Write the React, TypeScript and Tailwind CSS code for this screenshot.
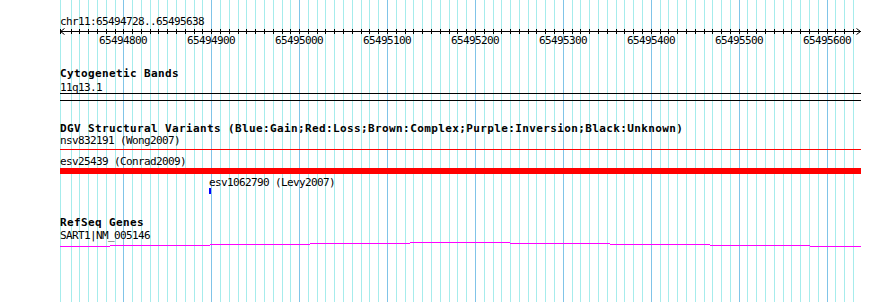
const START = 65494728;
const END = 65495638;
const LEFT = 60;
const SPAN = 800;

function toX(bp: number) {
  return Math.round(LEFT + ((bp - START) * SPAN) / (END - START));
}

// every 10 bp in the visible range
const grid: { bp: number; x: number; major: boolean }[] = [];
for (let bp = 65494730; bp <= 65495630; bp += 10) {
  grid.push({ bp, x: grid.length === 0 ? LEFT : toX(bp), major: bp % 100 === 0 });
}

// SART1 exon steps (x range, row)
const steps = [
  { x1: 60, x2: 110, y: 4 },
  { x1: 110, x2: 210, y: 3 },
  { x1: 210, x2: 310, y: 2 },
  { x1: 310, x2: 410, y: 1 },
  { x1: 410, x2: 510, y: 0 },
  { x1: 510, x2: 610, y: 1 },
  { x1: 610, x2: 710, y: 2 },
  { x1: 710, x2: 810, y: 3 },
  { x1: 810, x2: 861, y: 4 },
];

const mono =
  "font-['DejaVu_Sans_Mono',monospace] text-[11px] leading-[12px] pt-[1px] text-black whitespace-nowrap";
const label = `${mono} tracking-[-0.62px]`;
const title = `${mono} font-bold tracking-[0.38px]`;

function Grid() {
  return (
    <svg className="absolute inset-0" width={890} height={302} shapeRendering="crispEdges">
      {grid.map((g) => (
        <rect key={g.bp} x={g.x} y={0} width={1} height={302} fill={g.major ? '#80c4e8' : '#a6ecec'} />
      ))}
    </svg>
  );
}

function Ruler() {
  return (
    <svg width={801} height={19} className="block">
      <rect x={0} y={3} width={801} height={1} fill="#000" shapeRendering="crispEdges" />
      {grid.map((g) => (
        <rect key={g.bp} x={g.x - LEFT} y={1} width={1} height={5} fill="#000" shapeRendering="crispEdges" />
      ))}
      <path d="M4.5 0.5 L0.5 3.5 L4.5 6.5" stroke="#000" fill="none" />
      <path d="M796.5 0.5 L800.5 3.5 L796.5 6.5" stroke="#000" fill="none" />
      {grid
        .filter((g) => g.major)
        .map((g) => (
          <text
            key={g.bp}
            x={g.x - LEFT}
            y={16}
            textAnchor="middle"
            fontFamily="DejaVu Sans Mono, monospace"
            fontSize={11}
            letterSpacing={-0.62}
            fill="#000"
          >
            {g.bp}
          </text>
        ))}
    </svg>
  );
}

export default function App() {
  return (
    <div className="relative w-[890px] h-[302px] overflow-hidden bg-white">
      <Grid />
      <div className="relative flex flex-col w-[861px] pl-[60px] pt-[15px]">
        <div className={label}>chr11:65494728..65495638</div>
        <Ruler />

        <div className={`${title} mt-[20px]`}>Cytogenetic Bands</div>
        <div className={`${label} mt-[1px]`}>11q13.1</div>
        <div className="-mt-px h-[8px] border-y border-black" />

        <div className={`${title} mt-[21px]`}>
          DGV Structural Variants (Blue:Gain;Red:Loss;Brown:Complex;Purple:Inversion;Black:Unknown)
        </div>
        <div className={`${label} -mt-px`}>nsv832191 (Wong2007)</div>
        <div className="mt-[2px] h-[1px] bg-[#ff0000]" />
        <div className={`${label} mt-[5px]`}>esv25439 (Conrad2009)</div>
        <div className="h-[6px] bg-[#ff0000]" />
        <div className={`${label} mt-[2px] ml-[149px]`}>esv1062790 (Levy2007)</div>
        <div className="-mt-px ml-[149px] w-[2px] h-[6px] bg-[#0000ff]" />

        <div className={`${title} mt-[22px]`}>RefSeq Genes</div>
        <div className={label}>SART1|NM_005146</div>
        <svg width={801} height={6} className="block" shapeRendering="crispEdges">
          {steps.map((s) => (
            <rect key={s.x1} x={s.x1 - LEFT} y={s.y} width={s.x2 - s.x1} height={1} fill="#ff00ff" />
          ))}
        </svg>
      </div>
    </div>
  );
}
